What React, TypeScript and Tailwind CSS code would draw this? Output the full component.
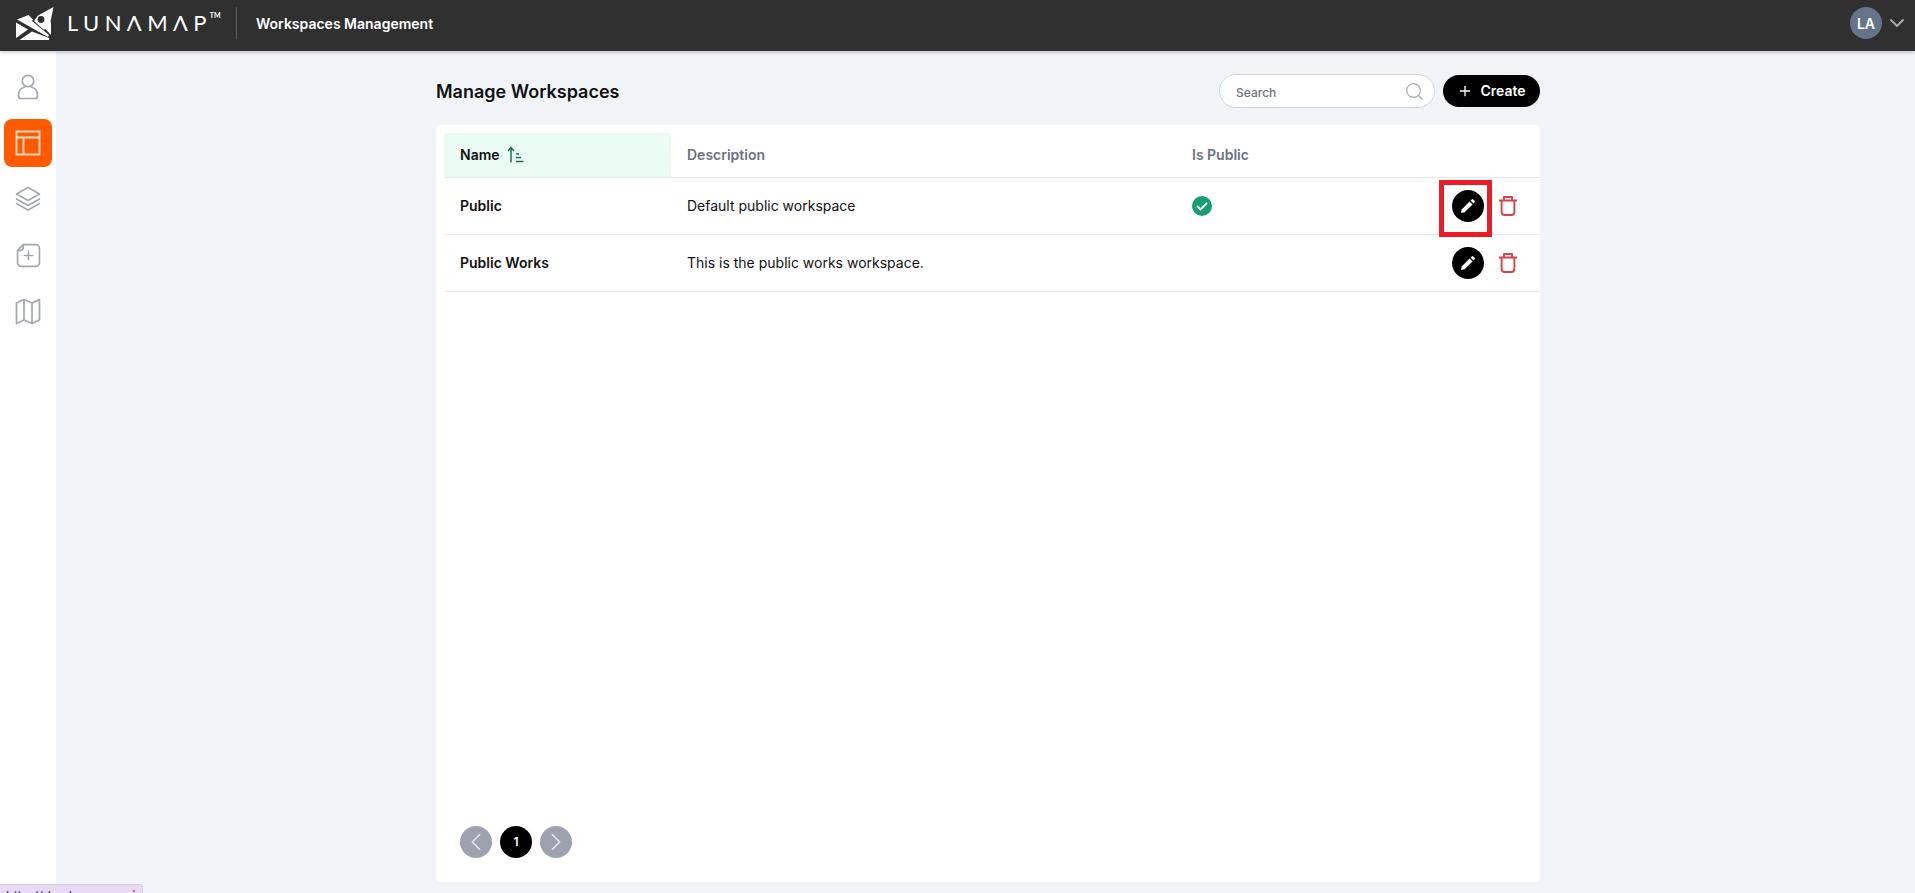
import type { ReactNode } from "react";
import { ChevronDown, ChevronLeft, ChevronRight, Plus } from "lucide-react";

const gray = "#a3a8b0";

function Logo() {
  return (
    <svg width="38" height="33" viewBox="0 0 38 33" className="shrink-0">
      <path d="M37.5 0 L22 8.5 L18 14 L28 23 L34 17 Z" fill="#fff" />
      <circle cx="25" cy="12.5" r="3.4" fill="#303030" />
      <path d="M1 12.5 L12.5 8 L17 12.5 L16 14 L33 28 L32 30 Z" fill="#fff" />
      <path d="M0 15.5 L12 22.5 L0 31 Z" fill="#fff" />
      <path d="M3.5 33 L33 33 L33 31 L16 24.5 Z" fill="#fff" />
      <path d="M27 19.5 L35 15 L35 28 Z" fill="#fff" />
    </svg>
  );
}

function UserIcon() {
  return (
    <svg width="22" height="26" viewBox="0 0 22 26" fill="none" stroke={gray} strokeWidth="1.7">
      <circle cx="11" cy="7" r="5.7" />
      <path d="M8 13 C4 14 1.5 17 1.5 21 V22 A2.5 2.5 0 0 0 4 24.5 H18 A2.5 2.5 0 0 0 20.5 22 V21 C20.5 17 18 14 14 13" />
    </svg>
  );
}

function WorkspaceIcon() {
  return (
    <svg width="26" height="26" viewBox="0 0 26 26" fill="none" stroke="#ffe3d1" strokeWidth="1.8">
      <rect x="1.5" y="1.5" width="23" height="23" />
      <path d="M1.5 7.5 H24.5 M8.5 7.5 V24.5" />
    </svg>
  );
}

function LayersIcon() {
  return (
    <svg width="26" height="26" viewBox="0 0 26 26" fill="none" stroke={gray} strokeWidth="1.6" strokeLinejoin="round" strokeLinecap="round">
      <path d="M13 1.5 L24.5 8 L13 14.5 L1.5 8 Z" />
      <path d="M1.5 13 L13 19.5 L24.5 13" />
      <path d="M1.5 17.5 L13 24 L24.5 17.5" />
    </svg>
  );
}

function NewPageIcon() {
  return (
    <svg width="25" height="25" viewBox="0 0 24 24" fill="none" stroke={gray} strokeWidth="1.6" strokeLinecap="round" strokeLinejoin="round">
      <path d="M7 1.5 H19 A3.5 3.5 0 0 1 22.5 5 V19 A3.5 3.5 0 0 1 19 22.5 H5 A3.5 3.5 0 0 1 1.5 19 V7 Z" />
      <path d="M7 1.5 V4 A3 3 0 0 1 4 7 H1.5" />
      <path d="M12 8 V16 M8 12 H16" />
    </svg>
  );
}

function MapIcon() {
  return (
    <svg width="26" height="27" viewBox="0 0 26 27" fill="none" stroke={gray} strokeWidth="1.7" strokeLinejoin="round">
      <path d="M1.5 5 L9 1.5 L17 5 L24.5 1.5 V22 L17 25.5 L9 22 L1.5 25.5 Z" />
      <path d="M9 1.5 V22 M17 5 V25.5" />
    </svg>
  );
}

function SearchIcon() {
  return (
    <svg width="17" height="17" viewBox="0 0 17 17" fill="none" stroke={gray} strokeWidth="1.2">
      <circle cx="7.5" cy="7.5" r="6.8" />
      <path d="M12.5 12.5 L16.5 16.5" />
    </svg>
  );
}

function SortIcon() {
  return (
    <svg width="17" height="17" viewBox="0 0 17 17" fill="none" stroke="#1f6f56" strokeWidth="1.5">
      <path d="M4 16.5 V1.5 M1 5 L4 1.5 L7 5" />
      <path d="M9 8 H12 M9 11.5 H14 M9 15.5 H16.5" />
    </svg>
  );
}

function CheckBadge() {
  return (
    <svg width="20" height="20" viewBox="0 0 20 20">
      <circle cx="10" cy="10" r="10" fill="#16a06f" />
      <path d="M5 10 L8.5 13.5 L15 7" fill="none" stroke="#fff" strokeWidth="1.8" />
    </svg>
  );
}

function PencilIcon() {
  return (
    <svg width="14" height="14" viewBox="0 0 14 14" fill="#fff">
      <path d="M0 14 L0.7 10.4 L8.6 2.5 L11.5 5.4 L3.6 13.3 Z" />
      <path d="M9.6 1.5 L10.8 0.4 A1 1 0 0 1 12.2 0.4 L13.6 1.8 A1 1 0 0 1 13.6 3.2 L12.5 4.4 Z" />
    </svg>
  );
}

function TrashIcon() {
  return (
    <svg width="18" height="20" viewBox="0 0 18 20" fill="none" stroke="#d6424a" strokeWidth="1.9" strokeLinejoin="round">
      <path d="M0 4.5 H18 M5 4.5 V1 H13 V4.5" />
      <path d="M2.6 4.5 V16 A3 3 0 0 0 5.6 19 H12.4 A3 3 0 0 0 15.4 16 V4.5" />
    </svg>
  );
}

function SideItem({ active, children }: { active?: boolean; children: ReactNode }) {
  return (
    <div className={`flex h-12 w-12 items-center justify-center rounded-lg ${active ? "bg-[#ff5a00]" : ""}`}>{children}</div>
  );
}

function Row({ name, description, isPublic, marked }: { name: string; description: string; isPublic?: boolean; marked?: boolean }) {
  return (
    <div className="flex h-[57px] items-center border-b border-[#e4e7eb] text-[14px] text-[#111]">
      <div className="w-[227px] pb-px pl-4 font-semibold">{name}</div>
      <div className="w-[506px] pb-px pl-4">{description}</div>
      <div className="flex flex-1 pl-[15px]">{isPublic && <CheckBadge />}</div>
      <div className="relative mr-[23px] flex items-center gap-[15px]">
        <div className="flex h-8 w-8 items-center justify-center rounded-full bg-black">
          <PencilIcon />
        </div>
        <TrashIcon />
        {marked && <div className="absolute -left-[13px] -top-[10px] h-[57px] w-[53px] border-[5px] border-[#ed1c24]" />}
      </div>
    </div>
  );
}

export default function App() {
  return (
    <div className="relative flex h-[893px] flex-col overflow-hidden bg-[#f1f4f7] font-['Inter',sans-serif]">
      <header className="z-10 flex h-[51px] shrink-0 items-center bg-[#303030] pb-[5px] pl-4 pr-[6px] shadow-[0_1px_4px_rgba(0,0,0,0.25)]">
        <Logo />
        <div className="ml-[13px] flex w-[154px] items-start font-['Lato',sans-serif] text-[22px] leading-none tracking-[0.245em] text-white">
          <span>LUNΛMΛP</span>
          <span className="-ml-[2px] text-[7px] font-bold leading-none tracking-normal">TM</span>
        </div>
        <div className="ml-[15px] mr-[19px] h-8 w-px bg-[#5c5c5c]" />
        <span className="text-[14px] font-semibold text-white">Workspaces Management</span>
        <div className="ml-auto flex items-center gap-[3px]">
          <div className="flex h-8 w-8 items-center justify-center rounded-full bg-[#64748b] text-[14px] font-semibold text-white">LA</div>
          <ChevronDown size={24} stroke="#a8a8a8" strokeWidth={2} />
        </div>
      </header>
      <div className="flex flex-1">
        <aside className="flex w-[56px] flex-col items-center gap-[8px] bg-white pt-[12px]">
          <SideItem><UserIcon /></SideItem>
          <SideItem active><WorkspaceIcon /></SideItem>
          <SideItem><LayersIcon /></SideItem>
          <SideItem><NewPageIcon /></SideItem>
          <SideItem><MapIcon /></SideItem>
        </aside>
        <main className="flex-1 pl-[380px] pr-[375px]">
          <div className="flex h-[74px] items-center justify-between pt-[6px]">
            <h1 className="pt-px text-[18px] font-semibold text-[#111]">Manage Workspaces</h1>
            <div className="flex items-center gap-2">
              <div className="flex h-[34px] w-[216px] items-center justify-between rounded-full border border-[#cfd3da] bg-white pl-4 pr-[11px]">
                <span className="pt-[3px] text-[12px] font-medium text-[#6b7280]">Search</span>
                <SearchIcon />
              </div>
              <div className="flex h-8 w-[97px] items-center justify-center gap-[7px] rounded-full bg-black pb-px text-[14px] font-semibold text-white">
                <Plus size={16} />
                Create
              </div>
            </div>
          </div>
          <div className="flex h-[757px] flex-col rounded bg-white pl-2 pt-2">
            <div className="flex h-[45px] shrink-0 items-center border-b border-[#e4e7eb] text-[14px] font-semibold text-[#6b7280]">
              <div className="flex h-full w-[227px] items-center gap-[7px] bg-[#e9fbf3] pb-px pl-4 text-[#111]">
                Name <SortIcon />
              </div>
              <div className="w-[506px] pb-px pl-4">Description</div>
              <div className="pb-px pl-[15px]">Is Public</div>
            </div>
            <Row name="Public" description="Default public workspace" isPublic marked />
            <Row name="Public Works" description="This is the public works workspace." />
            <div className="mb-6 mt-auto flex gap-2 pl-4">
              <div className="flex h-8 w-8 items-center justify-center rounded-full bg-[#9ca3af]"><ChevronLeft size={30} stroke="#e5e7eb" strokeWidth={1.2} /></div>
              <div className="flex h-8 w-8 items-center justify-center rounded-full bg-black text-[12px] font-semibold text-white">1</div>
              <div className="flex h-8 w-8 items-center justify-center rounded-full bg-[#9ca3af]"><ChevronRight size={30} stroke="#e5e7eb" strokeWidth={1.2} /></div>
            </div>
          </div>
        </main>
      </div>
      <div className="absolute bottom-0 left-0 h-[9px] w-[143px] overflow-hidden rounded-tr border-r border-t border-[#d7c8e6] bg-[#e8daf5] pl-[6px] pt-[4px] text-[13px] leading-[14px] text-[#333]">
        http://dev.lunamap.ai
      </div>
    </div>
  );
}
